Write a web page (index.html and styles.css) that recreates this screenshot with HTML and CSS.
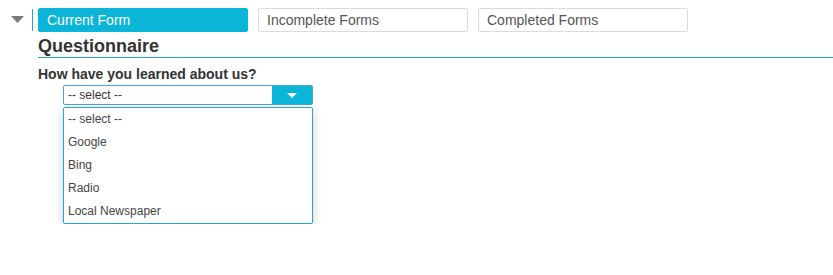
FILE: index.html
```html
<!DOCTYPE html>
<html>
<head>
<meta charset="utf-8">
<link rel="stylesheet" href="styles.css">
</head>
<body>
<div class="page">
  <div class="tabrow">
    <span class="toggle"><svg width="13" height="7" viewBox="0 0 13 7"><path d="M0 0 H13 L6.5 7 Z" fill="#7a7a7a"/></svg></span>
    <span class="divider"></span>
    <div class="tabs">
      <div class="tab active">Current Form</div>
      <div class="tab">Incomplete Forms</div>
      <div class="tab">Completed Forms</div>
    </div>
  </div>
  <div class="content">
    <h2 class="title">Questionnaire</h2>
    <div class="question">How have you learned about us?</div>
    <div class="selectwrap">
      <div class="select">
        <span class="value">-- select --</span>
        <span class="arrow"><svg width="10" height="5" viewBox="0 0 10 5"><path d="M0 0 H10 L5 5 Z" fill="#fff"/></svg></span>
      </div>
      <div class="options">
        <div class="option">-- select --</div>
        <div class="option">Google</div>
        <div class="option">Bing</div>
        <div class="option">Radio</div>
        <div class="option">Local Newspaper</div>
      </div>
    </div>
  </div>
</div>
</body>
</html>
```
FILE: styles.css
```css
html, body {
  margin: 0;
  padding: 0;
  background: #fff;
  font-family: "Liberation Sans", Arial, sans-serif;
  color: #333;
}
.page {
  padding-top: 8px;
}
.tabrow {
  display: flex;
  align-items: stretch;
  height: 24px;
}
.toggle {
  width: 32px;
  display: flex;
  align-items: flex-start;
  padding-left: 11px;
  padding-top: 8px;
  box-sizing: border-box;
}
.divider {
  width: 1px;
  background: #0bb5d7;
  margin: 1px 5px 1px 0;
}
.tabs {
  display: flex;
  gap: 10px;
}
.tab {
  width: 210px;
  height: 24px;
  box-sizing: border-box;
  border: 1px solid #dcdcdc;
  border-radius: 2px;
  font-size: 14px;
  line-height: 22px;
  padding-left: 8px;
  color: #555;
}
.tab.active {
  background: #0bb5d7;
  border-color: #0bb5d7;
  color: #fff;
}
.content {
  margin-left: 38px;
}
.title {
  margin: 4px 0 0 0;
  font-size: 18px;
  line-height: 20px;
  font-weight: bold;
  color: #333;
  padding-bottom: 1px;
  border-bottom: 1px solid #25a7c6;
}
.question {
  margin-top: 8px;
  font-size: 14px;
  line-height: 16px;
  font-weight: bold;
  color: #333;
}
.selectwrap {
  margin: 3px 0 0 25px;
  width: 250px;
}
.select {
  display: flex;
  height: 20px;
  box-sizing: border-box;
  border: 1px solid #4a9fe6;
  border-radius: 2px;
  overflow: hidden;
}
.value {
  flex: 1;
  font-size: 12px;
  line-height: 18px;
  padding-left: 4px;
  color: #333;
}
.arrow {
  width: 40px;
  background: #0bb5d7;
  display: flex;
  align-items: center;
  justify-content: center;
}
.options {
  margin-top: 2px;
  width: 250px;
  box-sizing: border-box;
  background: #fff;
  border: 1px solid #2aa3dc;
  border-radius: 2px;
  box-shadow: 0 4px 10px rgba(0, 0, 0, 0.2);
}
.option {
  height: 23px;
  line-height: 23px;
  font-size: 12px;
  padding-left: 4px;
  color: #444;
}
```
